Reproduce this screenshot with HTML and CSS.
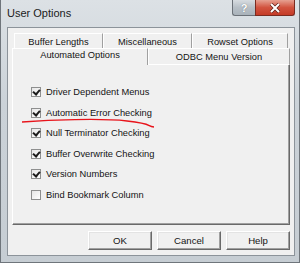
FILE: index.html
```html
<!DOCTYPE html>
<html lang="en">
<head>
  <meta charset="UTF-8">
  <title>User Options</title>
  <link rel="stylesheet" href="styles.css">
</head>
<body>
  <div class="window">
    <div class="titlebar">
      <span class="title">User Options</span>
      <div class="caption">
        <span class="cap-help">?</span>
        <span class="cap-close">
          <svg width="14" height="10" viewBox="0 0 14 10">
            <path d="M3 1 L11 9 M11 1 L3 9" stroke="#5b2019" stroke-width="3.4" fill="none"/>
            <path d="M3 1 L11 9 M11 1 L3 9" stroke="#fff" stroke-width="2" fill="none"/>
          </svg>
        </span>
      </div>
    </div>

    <div class="client">
      <!-- tabs: two rows, selected row sits on the panel -->
      <div class="tabs">
        <div class="tabrow back">
          <div class="tab t-buffer">Buffer Lengths</div>
          <div class="tab t-misc">Miscellaneous</div>
          <div class="tab t-rowset">Rowset Options</div>
        </div>
        <div class="tabrow front">
          <div class="tab selected t-auto">Automated Options</div>
          <div class="tab t-odbc">ODBC Menu Version</div>
        </div>
      </div>

      <div class="panel">
        <label class="check"><span class="box on"></span>Driver Dependent Menus</label>
        <label class="check"><span class="box on"></span>Automatic Error Checking</label>
        <label class="check"><span class="box on"></span>Null Terminator Checking</label>
        <label class="check"><span class="box on"></span>Buffer Overwrite Checking</label>
        <label class="check"><span class="box on"></span>Version Numbers</label>
        <label class="check"><span class="box"></span>Bind Bookmark Column</label>
      </div>

      <div class="buttons">
        <button>OK</button>
        <button>Cancel</button>
        <button>Help</button>
      </div>
    </div>

    <!-- hand drawn red mark under the second option -->
    <svg class="mark" width="300" height="263" viewBox="0 0 300 263">
      <path d="M22 122 C 50 120, 100 118, 127 121 S 146 126, 154 127" stroke="#e8141b" stroke-width="1.3" fill="none"/>
    </svg>
  </div>
</body>
</html>
```

FILE: styles.css
```css
body {
  margin: 0;
  font-family: "Liberation Sans", Arial, sans-serif;
}
.window {
  position: relative;
  width: 300px;
  height: 263px;
  box-sizing: border-box;
  background: linear-gradient(#dce1e5, #cbd2d8 40%, #c6cdd3);
  border: 1px solid #6f757b;
  border-top: none;
  padding: 0 4px 6px 6px;
  display: flex;
  flex-direction: column;
}
.titlebar {
  height: 27px;
  display: flex;
  align-items: flex-start;
}
.title {
  margin-top: 7px;
  font-size: 11px;
  color: #1b1b1b;
}
.caption {
  margin-left: auto;
  display: flex;
}
.cap-help,
.cap-close {
  height: 16px;
  box-sizing: border-box;
  display: flex;
  align-items: center;
  justify-content: center;
  border: 1px solid #6b7178;
  border-top: none;
}
.cap-help {
  width: 23px;
  background: linear-gradient(#d7dce0, #b7bfc6 50%, #a9b2ba);
  border-right: none;
  border-bottom-left-radius: 3px;
  color: #fff;
  font-weight: bold;
  font-size: 11px;
  text-shadow: 0 0 1px #5e656c;
}
.cap-close {
  width: 40px;
  background: linear-gradient(#e6a091, #d2533f 50%, #c43b27);
  border-color: #7a2b20;
  border-bottom-right-radius: 3px;
}
.client {
  flex: 1;
  background: #f0f0f0;
  border: 1px solid #8c939a;
  padding: 5px 4px 4px 4px;
  display: flex;
  flex-direction: column;
  font-size: 9.3px;
  color: #141414;
}
.tabrow {
  display: flex;
  height: 15px;
}
.tabrow.back {
  margin: 0 2px;
}
.tabrow.front {
  height: 16px;
}
.tab {
  box-sizing: border-box;
  border-top: 1px solid #fff;
  border-left: 1px solid #fff;
  border-right: 1px solid #a0a0a0;
  text-align: center;
  padding-top: 3px;
  white-space: nowrap;
}
.t-buffer { width: 89px; }
.t-misc { width: 89px; }
.t-rowset { width: 96px; }
.t-auto { width: 136px; }
.t-odbc { width: 142px; padding-top: 3px; }
.tab.selected {
  position: relative;
  height: 17px;
  margin-bottom: -1px;
  padding-top: 1px;
  background: #f0f0f0;
  z-index: 1;
}
.panel {
  height: 161px;
  box-sizing: border-box;
  border-top: 1px solid #fff;
  border-left: 1px solid #fff;
  border-right: 1px solid #696969;
  border-bottom: 1px solid #696969;
  box-shadow: inset -1px -1px 0 #a0a0a0;
  padding: 16.7px 0 0 18px;
}
.check {
  display: flex;
  align-items: center;
  height: 20.6px;
}
.box {
  width: 10px;
  height: 10px;
  box-sizing: border-box;
  border: 1px solid #8e8f8f;
  background: linear-gradient(135deg, #e6e6e6, #fff);
  margin-right: 5px;
  position: relative;
}
.box.on::after {
  content: "";
  position: absolute;
  left: 2px;
  top: 0px;
  width: 3px;
  height: 5px;
  border-right: 2px solid #1c1c1c;
  border-bottom: 2px solid #1c1c1c;
  transform: rotate(40deg);
}
.buttons {
  margin-top: 6px;
  display: flex;
  justify-content: flex-end;
  gap: 5px;
}
button {
  width: 64px;
  height: 19px;
  padding: 0;
  font-family: "Liberation Sans", Arial, sans-serif;
  font-size: 9.6px;
  color: #141414;
  background: #f0f0f0;
  border: 1px solid;
  border-color: #fff #696969 #696969 #fff;
  box-shadow: inset -1px -1px 0 #a0a0a0, inset 1px 1px 0 #e3e3e3;
}
.mark {
  position: absolute;
  left: -1px;
  top: 0;
  pointer-events: none;
}
```
